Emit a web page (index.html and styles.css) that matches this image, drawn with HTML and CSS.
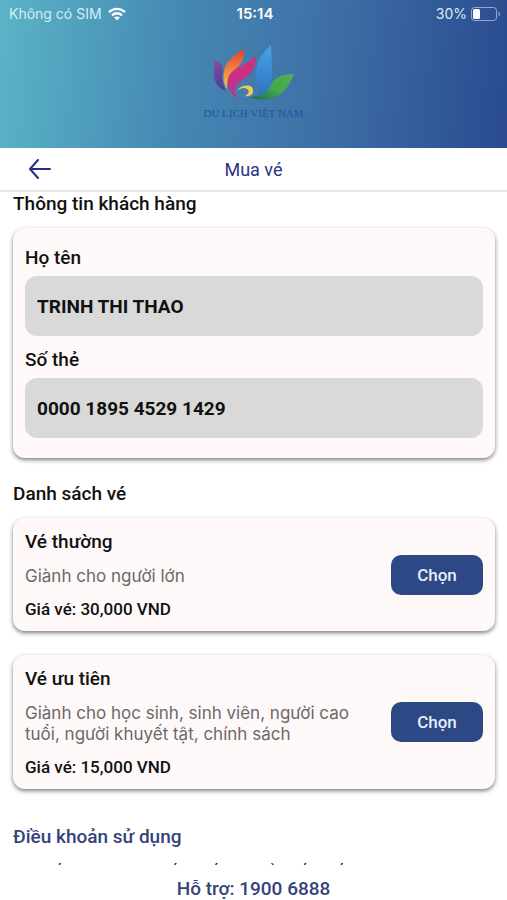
FILE: index.html
```
<!DOCTYPE html>
<html lang="vi">
<head>
    <meta charset="UTF-8">
    <meta name="viewport" content="width=device-width, initial-scale=1.0">
    <title>Mua vé</title>
    <link rel="stylesheet" href="styles.css">
</head>
<body>
    <header class="header">
        <div class="status-bar">
            <div class="status-left">
                <span>Không có SIM</span>
                <svg width="18" height="14" viewBox="0 0 18 14" fill="none" stroke="#fff" stroke-width="2.4">
                    <path d="M1 5.2C5.500 .8 12.500 .8 17 5.200"/>
                    <path d="M4 8.300C6.800 5.600 11.200 5.600 14 8.300"/>
                    <path d="M9 13.500L6 10.600C7.700 9 10.300 9 12 10.600Z" fill="#fff" stroke="none"/>
                </svg>
            </div>
            <strong class="status-time">15:14</strong>
            <div class="status-right">
                <span>30%</span>
                <svg width="30" height="14" viewBox="0 0 30 14">
                    <rect x="0.500" y="0.500" width="25" height="13" rx="3" fill="none" stroke="#fff" stroke-opacity="0.5"/>
                    <rect x="2" y="2" width="7" height="10" rx="1.500" fill="#fff"/>
                    <path d="M27.500 4.500c2 1 2 4 0 5z" fill="#fff" fill-opacity="0.5"/>
                </svg>
            </div>
        </div>
        <div class="logo">
            <svg width="82" height="56" viewBox="0 0 82 56">
                <defs>
                    <linearGradient id="purple" x1="0" y1="0" x2="0" y2="1"><stop offset="0" stop-color="#8a4a9e"/><stop offset="1" stop-color="#4a3f96"/></linearGradient>
                    <linearGradient id="orange" x1="0" y1="0" x2="0" y2="1"><stop offset="0" stop-color="#dd3f35"/><stop offset="0.600" stop-color="#f0913f"/><stop offset="1" stop-color="#efc357"/></linearGradient>
                    <linearGradient id="pink" x1="0" y1="0" x2="0" y2="1"><stop offset="0" stop-color="#d82c78"/><stop offset="1" stop-color="#b8378f"/></linearGradient>
                    <linearGradient id="blue" x1="0" y1="0" x2="0" y2="1"><stop offset="0" stop-color="#46a4e4"/><stop offset="1" stop-color="#2d72c6"/></linearGradient>
                    <linearGradient id="green" x1="0" y1="1" x2="1" y2="0"><stop offset="0" stop-color="#16694f"/><stop offset="0.500" stop-color="#45a850"/><stop offset="1" stop-color="#52b04c"/></linearGradient>
                </defs>
                <path d="M2 15C7 17 10 20 10 25C8 33 10 40 13 46C5 43 1 37 1 29C1 23 1 19 2 15Z" fill="url(#purple)"/>
                <path d="M31 4C32 14 28 19 22 25C15 31 14 38 14 44C9 37 10 27 13 20C17 13 24 8 31 4Z" fill="url(#orange)"/>
                <path d="M43 11C43 21 39 29 31 34C22 39 19 45 25 54C15 48 12 37 17 29C24 20 35 20 43 11Z" fill="url(#pink)"/>
                <path d="M58 0C59 17 60 32 57 42C55 48 49 52 42 52C47 48 48 43 44 37C42 25 43 14 58 0Z" fill="url(#blue)"/>
                <path d="M81 29C77 39 72 48 61 53C53 56 43 55 36 52C47 52 53 48 57 42C60 33 68 29 81 29Z" fill="url(#green)"/>
                <path d="M24 46C28 39 40 39 40 45C41 50 36 52 32 51C36 49 37 46 34 44C31 42 28 43 24 46Z" fill="#edc95a"/>
            </svg>
            <div class="logo-text">DU LỊCH VIỆT NAM</div>
        </div>
    </header>

    <nav class="navbar">
        <a href="#" class="back" aria-label="Quay lại">
            <svg width="24" height="20" viewBox="0 0 24 20" fill="none" stroke="#262f85" stroke-width="2" stroke-linecap="round" stroke-linejoin="round">
                <path d="M22 10H2M10 1L2 10L10 19"/>
            </svg>
        </a>
        <h1>Mua vé</h1>
    </nav>

    <main class="content">
        <h2>Thông tin khách hàng</h2>
        <form class="card customer">
            <label for="fullName">Họ tên</label>
            <input type="text" id="fullName" value="TRINH THI THAO" readonly>
            <label for="cardNumber">Số thẻ</label>
            <input type="text" id="cardNumber" value="0000 1895 4529 1429" readonly>
        </form>

        <h2>Danh sách vé</h2>
        <div class="card ticket">
            <div class="ticket-info">
                <h3>Vé thường</h3>
                <p class="desc">Giành cho người lớn</p>
                <p class="price">Giá vé: 30,000 VND</p>
            </div>
            <button type="button" class="choose-btn">Chọn</button>
        </div>
        <div class="card ticket">
            <div class="ticket-info">
                <h3>Vé ưu tiên</h3>
                <p class="desc">Giành cho học sinh, sinh viên, người cao tuổi, người khuyết tật, chính sách</p>
                <p class="price">Giá vé: 15,000 VND</p>
            </div>
            <button type="button" class="choose-btn">Chọn</button>
        </div>

        <h2 class="terms-title">Điều khoản sử dụng</h2>
        <p class="terms">1. Xuất vé theo giá đến suất có thể nhất xuất</p>
    </main>

    <footer class="support">Hỗ trợ: 1900 6888</footer>
</body>
</html>
```
FILE: styles.css
```
* {
    box-sizing: border-box;
}
body {
    display: flex;
    flex-direction: column;
    height: 100vh;
    margin: 0;
    font-family: Roboto, sans-serif;
    background-color: #fff;
    color: #111;
}
h1, h2, h3, p {
    margin: 0;
}
.header {
    flex: none;
    height: 148px;
    background: linear-gradient(95deg, #5ab4c6 0%, #4588b4 35%, #3f73a8 60%, #2a4b90 100%);
    color: #fff;
}
.status-bar {
    display: grid;
    grid-template-columns: 1fr auto 1fr;
    align-items: center;
    height: 27px;
    padding: 0 6px 0 9px;
    font-family: Inter, sans-serif;
    font-size: 14px;
}
.status-left, .status-right {
    display: flex;
    align-items: center;
    gap: 6px;
    color: #d9ecf4;
}
.status-right {
    justify-content: flex-end;
    gap: 4px;
}
.status-time {
    font-size: 15px;
    font-weight: 600;
}
.logo {
    display: flex;
    flex-direction: column;
    align-items: center;
    padding-top: 18px;
}
.logo-text {
    font-family: "Liberation Serif", serif;
    font-size: 11px;
    line-height: 24px;
    color: #1f55a0;
}
.navbar {
    flex: none;
    display: grid;
    grid-template-columns: 1fr auto 1fr;
    align-items: center;
    height: 44px;
    padding: 0 28px;
    border-bottom: 2px solid #e6e6e8;
}
.back {
    display: flex;
}
.navbar h1 {
    font-size: 18px;
    font-weight: 400;
    color: #2b3480;
}
.content {
    flex: 1;
    min-height: 0;
    padding: 0 12px 0 13px;
    overflow-y: auto;
    scrollbar-width: none;
}
h2, h3, label {
    font-size: 19px;
    font-weight: 500;
    line-height: 24px;
}
h2 {
    margin-bottom: 12px;
}
.card {
    margin-bottom: 24px;
    padding: 12px;
    border-radius: 12px;
    background-color: #fef9f8;
    box-shadow: 0 2px 4px rgba(0, 0, 0, 0.5);
}
.customer {
    display: flex;
    flex-direction: column;
    gap: 6px;
    padding: 18px 12px 20px;
}
.customer input {
    height: 60px;
    padding: 0 12px;
    border: none;
    border-radius: 12px;
    background-color: #d9d9d9;
    font-family: inherit;
    font-size: 19px;
    font-weight: 700;
    color: #111;
}
.customer input + label {
    margin-top: 6px;
}
.ticket {
    display: flex;
    align-items: center;
    justify-content: space-between;
    gap: 36px;
}
.desc {
    margin: 12px 0;
    font-family: Inter, sans-serif;
    font-size: 17px;
    line-height: 21px;
    color: #6b6868;
}
.price {
    font-size: 17px;
    font-weight: 500;
    line-height: 20px;
}
.choose-btn {
    flex: none;
    width: 92px;
    height: 40px;
    border: none;
    border-radius: 10px;
    background-color: #2c4885;
    font-family: inherit;
    font-size: 17px;
    font-weight: 500;
    color: #e9eefa;
    cursor: pointer;
}
.terms-title {
    margin-top: 36px;
    margin-bottom: 10px;
    color: #34437a;
}
.terms {
    font-size: 17px;
    line-height: 24px;
}
.support {
    flex: none;
    height: 35px;
    padding-top: 12px;
    font-size: 19px;
    font-weight: 500;
    line-height: 24px;
    text-align: center;
    color: #34437a;
}
```
